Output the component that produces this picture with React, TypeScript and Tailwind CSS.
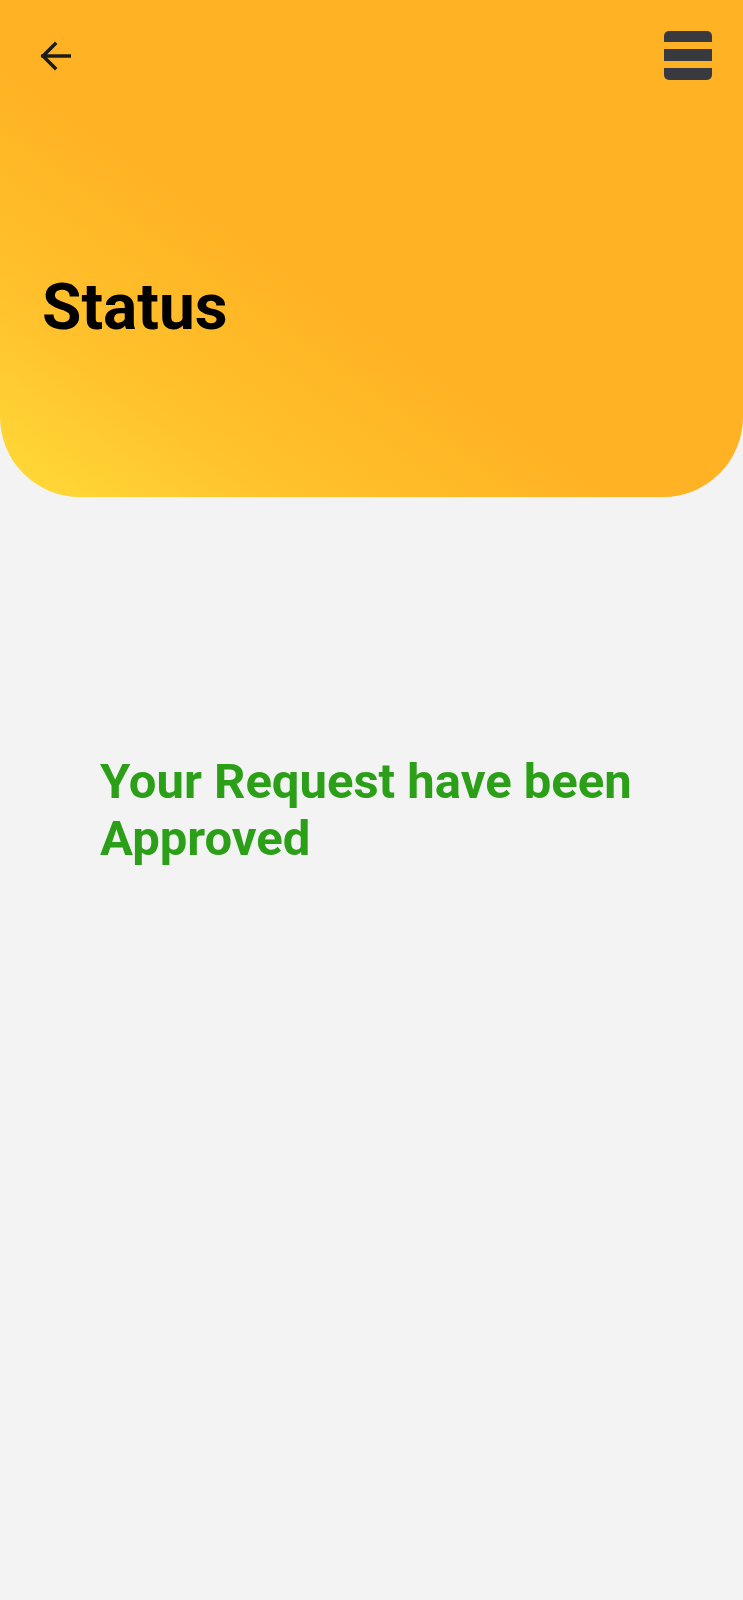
const BackArrow = () => (
  <svg width="32" height="32" viewBox="0 0 32 32" fill="none" stroke="#1c1c1c" strokeWidth="3.5" strokeLinecap="square">
    <path d="M4 16h27" />
    <path d="M16 4L4 16l12 12" strokeLinejoin="miter" />
  </svg>
);

const MenuIcon = () => (
  <div className="flex flex-col gap-[7px] w-[48px]">
    <div className="h-[11px] bg-[#393a40] rounded-t-[5px]" />
    <div className="h-[12px] bg-[#393a40]" />
    <div className="h-[12px] bg-[#393a40] rounded-b-[5px]" />
  </div>
);

const App = () => {
  return (
    <div className="min-h-[1600px] w-full bg-[#f3f3f3] font-['Roboto',sans-serif]">
      <header className="h-[497px] rounded-b-[80px] bg-[linear-gradient(35deg,#ffdb38_0%,#ffc22c_20%,#ffb324_42%,#ffb223_100%)]">
        <div className="flex items-center justify-between pt-[31px] pl-[39px] pr-[31px]">
          <button className="w-[32px] h-[32px]">
            <BackArrow />
          </button>
          <MenuIcon />
        </div>
        <h1 className="mt-[196px] ml-[42px] text-[64px] leading-none font-bold text-black">Status</h1>
      </header>
      <main className="px-[100px] pt-[256px]">
        <p className="text-[49px] leading-[57px] font-bold text-[#2c9f18]">Your Request have been Approved</p>
      </main>
    </div>
  );
};

export default App;
